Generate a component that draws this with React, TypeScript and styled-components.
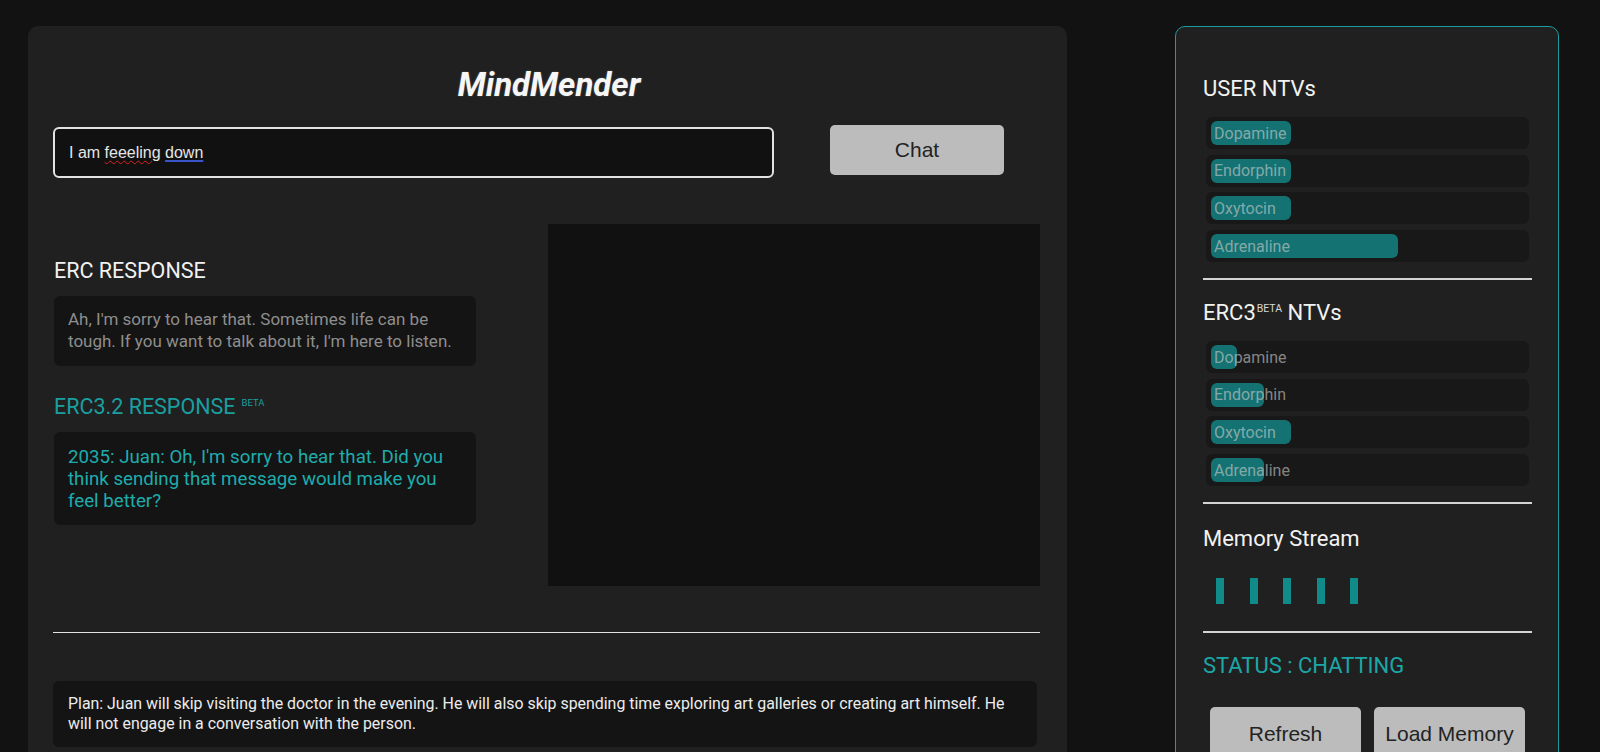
import * as React from "react";
import styled, {createGlobalStyle} from "styled-components";

const GlobalStyle = createGlobalStyle`
  html, body {
    margin: 0;
    padding: 0;
    background: #121212;
    font-family: Roboto, "Noto Sans", sans-serif;
    color: #ececec;
  }
  * {
    box-sizing: border-box;
  }
`

const Page = styled('div')`
  display: flex;
  align-items: flex-start;
  gap: 108px;
  padding: 26px 41px 0 28px;
  height: 752px;
  overflow: hidden;
`

const ChatPanel = styled('div')`
  width: 1039px;
  flex-shrink: 0;
  background: #202020;
  border-radius: 10px;
  padding: 39px 27px 40px 25px;
`

const Title = styled('h1')`
  margin: 0;
  padding-left: 5px;
  font-size: 33px;
  line-height: 40px;
  font-weight: 700;
  font-style: italic;
  text-align: center;
  color: #f6f6f6;
  text-shadow: 0 0 2px rgba(255, 255, 255, 0.25);
`

const InputRow = styled('div')`
  display: flex;
  align-items: flex-start;
  gap: 56px;
  margin-top: 20px;
`

const FakeInput = styled('div')`
  width: 721px;
  height: 51px;
  margin-top: 1.5px;
  padding: 0 14px;
  background: #111111;
  border: 2px solid #e2e2e2;
  border-radius: 6px;
  font-family: "Liberation Sans", Arial, sans-serif;
  font-size: 16px;
  line-height: 47px;
  color: #e6e6e6;
  white-space: pre;
`

const Misspelled = styled('span')<{ $grammar?: boolean }>`
  text-decoration-line: underline;
  text-decoration-style: ${p => p.$grammar ? 'solid' : 'wavy'};
  text-decoration-color: ${p => p.$grammar ? '#3a55c8' : '#d22'};
  text-decoration-thickness: ${p => p.$grammar ? '2px' : '1px'};
  text-underline-offset: 2px;
`

const GreyButton = styled('button')<{ $w: number }>`
  width: ${p => p.$w}px;
  height: 50px;
  flex-shrink: 0;
  border: none;
  border-radius: 5px;
  background: #bcbcbc;
  color: #232323;
  font-family: "Liberation Sans", Arial, sans-serif;
  font-size: 21px;
  padding: 0;
  cursor: pointer;
`

const ResponseRow = styled('div')`
  display: flex;
  justify-content: space-between;
  align-items: flex-start;
  margin-top: 46px;
`

const ResponseColumn = styled('div')`
  width: 423px;
  padding: 34px 0 0 1px;
`

const Heading = styled('h2')<{ $teal?: boolean }>`
  margin: 0;
  font-size: 21.5px;
  line-height: 26px;
  font-weight: 400;
  color: ${p => p.$teal ? '#1a9fa0' : '#f2f2f2'};

  sup {
    font-size: 9.5px;
    line-height: 1;
    vertical-align: top;
    position: relative;
    top: 4.5px;
    margin-left: 6px;
  }
`

const ResponseBox = styled('div')<{ $teal?: boolean }>`
  margin: 12.5px 0 27.5px;
  padding: ${p => p.$teal ? '13.5px' : '13.3px'} 14px;
  background: #141414;
  border-radius: 6px;
  font-size: ${p => p.$teal ? '18.7px' : '17px'};
  line-height: ${p => p.$teal ? '22px' : '21.7px'};
  color: ${p => p.$teal ? '#1eacac' : '#8e8e8e'};
`

const Viewer = styled('div')`
  width: 492px;
  height: 362px;
  background: #111111;
`

const Rule = styled('hr')<{ $thick?: boolean }>`
  border: none;
  margin: 0;
  height: ${p => p.$thick ? '2px' : '1px'};
  background: ${p => p.$thick ? '#d4d4d4' : '#e4e4e4'};
`

const LeftRule = styled(Rule)`
  margin-top: 46px;
`

const PlanBox = styled('div')`
  margin: 48px 3px 0 0;
  padding: 13px 14px 13px 15px;
  background: #141414;
  border-radius: 6px;
  font-size: 15.9px;
  line-height: 20px;
  color: #ececec;
`

const SidePanel = styled('div')`
  width: 384px;
  flex-shrink: 0;
  background: #202020;
  border: 1px solid #1c9c9c;
  border-radius: 10px;
  padding: 49px 26px 40px 27px;
`

const SideHeading = styled('h2')<{ $teal?: boolean }>`
  margin: 0;
  font-size: 22px;
  line-height: 26px;
  font-weight: 400;
  color: ${p => p.$teal ? '#1ca7a7' : '#f2f2f2'};

  sup {
    font-size: 10.5px;
    line-height: 1;
    vertical-align: top;
    position: relative;
    top: 4px;
    margin-left: 1px;
    color: #d8d8d8;
  }
`

const TrackList = styled('div')`
  display: flex;
  flex-direction: column;
  gap: 5.7px;
  margin: 15px 3px 16px;
`

const Track = styled('div')`
  display: grid;
  height: 32px;
  padding: 4px 5px;
  background: #181818;
  border-radius: 6px;
`

const Fill = styled('div')`
  grid-area: 1 / 1;
  height: 24px;
  background: #147272;
  border-radius: 6px;
`

const TrackLabel = styled('span')`
  grid-area: 1 / 1;
  align-self: center;
  padding-left: 3px;
  font-size: 16px;
  color: rgba(205, 205, 205, 0.62);
`

const SideSection = styled('div')<{ $top?: number }>`
  padding-top: ${p => p.$top ?? 20}px;
`

const MemoryBars = styled('div')`
  display: flex;
  gap: 25.5px;
  padding: 26px 0 27px 13px;
`

const MemoryBar = styled('div')`
  width: 8px;
  height: 26px;
  background: #118a8a;
`

const Status = styled(SideHeading)`
  margin-top: 20px;
`

const ButtonRow = styled('div')`
  display: flex;
  gap: 13px;
  margin: 28px 0 0 7px;

  button {
    height: 54px;
  }
`

type Ntv = { label: string, value: number }

const userNtvs: Ntv[] = [
    {label: 'Dopamine', value: 80},
    {label: 'Endorphin', value: 80},
    {label: 'Oxytocin', value: 80},
    {label: 'Adrenaline', value: 187},
]

const ercNtvs: Ntv[] = [
    {label: 'Dopamine', value: 26},
    {label: 'Endorphin', value: 53},
    {label: 'Oxytocin', value: 80},
    {label: 'Adrenaline', value: 53},
]

const NtvTracks: React.FC<{ items: Ntv[] }> = ({items}) => (
    <TrackList>
        {items.map(item => <Track key={item.label}>
            <Fill style={{width: `${item.value}px`}}/>
            <TrackLabel>{item.label}</TrackLabel>
        </Track>)}
    </TrackList>
)

const planText = 'Plan: Juan will skip visiting the doctor in the evening. He will also skip spending time exploring art galleries or creating art himself. He will not engage in a conversation with the person.'

const App: React.FC = () => {
    return <>
        <GlobalStyle/>
        <Page>
            <ChatPanel>
                <Title>MindMender</Title>
                <InputRow>
                    <FakeInput>I am <Misspelled>feeeling</Misspelled> <Misspelled $grammar>down</Misspelled></FakeInput>
                    <GreyButton $w={174}>Chat</GreyButton>
                </InputRow>
                <ResponseRow>
                    <ResponseColumn>
                        <Heading>ERC RESPONSE</Heading>
                        <ResponseBox>
                            Ah, I'm sorry to hear that. Sometimes life can be tough. If you want to talk about it, I'm here to listen.
                        </ResponseBox>
                        <Heading $teal>ERC3.2 RESPONSE<sup>BETA</sup></Heading>
                        <ResponseBox $teal>
                            2035: Juan: Oh, I'm sorry to hear that. Did you think sending that message would make you feel better?
                        </ResponseBox>
                    </ResponseColumn>
                    <Viewer/>
                </ResponseRow>
                <LeftRule/>
                <PlanBox>{planText}</PlanBox>
            </ChatPanel>
            <SidePanel>
                <SideHeading>USER NTVs</SideHeading>
                <NtvTracks items={userNtvs}/>
                <Rule $thick/>
                <SideSection>
                    <SideHeading>ERC3<sup>BETA</sup> NTVs</SideHeading>
                    <NtvTracks items={ercNtvs}/>
                </SideSection>
                <Rule $thick/>
                <SideSection $top={22}>
                    <SideHeading>Memory Stream</SideHeading>
                    <MemoryBars>
                        {[0, 1, 2, 3, 4].map(i => <MemoryBar key={i}/>)}
                    </MemoryBars>
                </SideSection>
                <Rule $thick/>
                <Status $teal>STATUS : CHATTING</Status>
                <ButtonRow>
                    <GreyButton $w={151}>Refresh</GreyButton>
                    <GreyButton $w={151}>Load Memory</GreyButton>
                </ButtonRow>
            </SidePanel>
        </Page>
    </>
};

export default App;
